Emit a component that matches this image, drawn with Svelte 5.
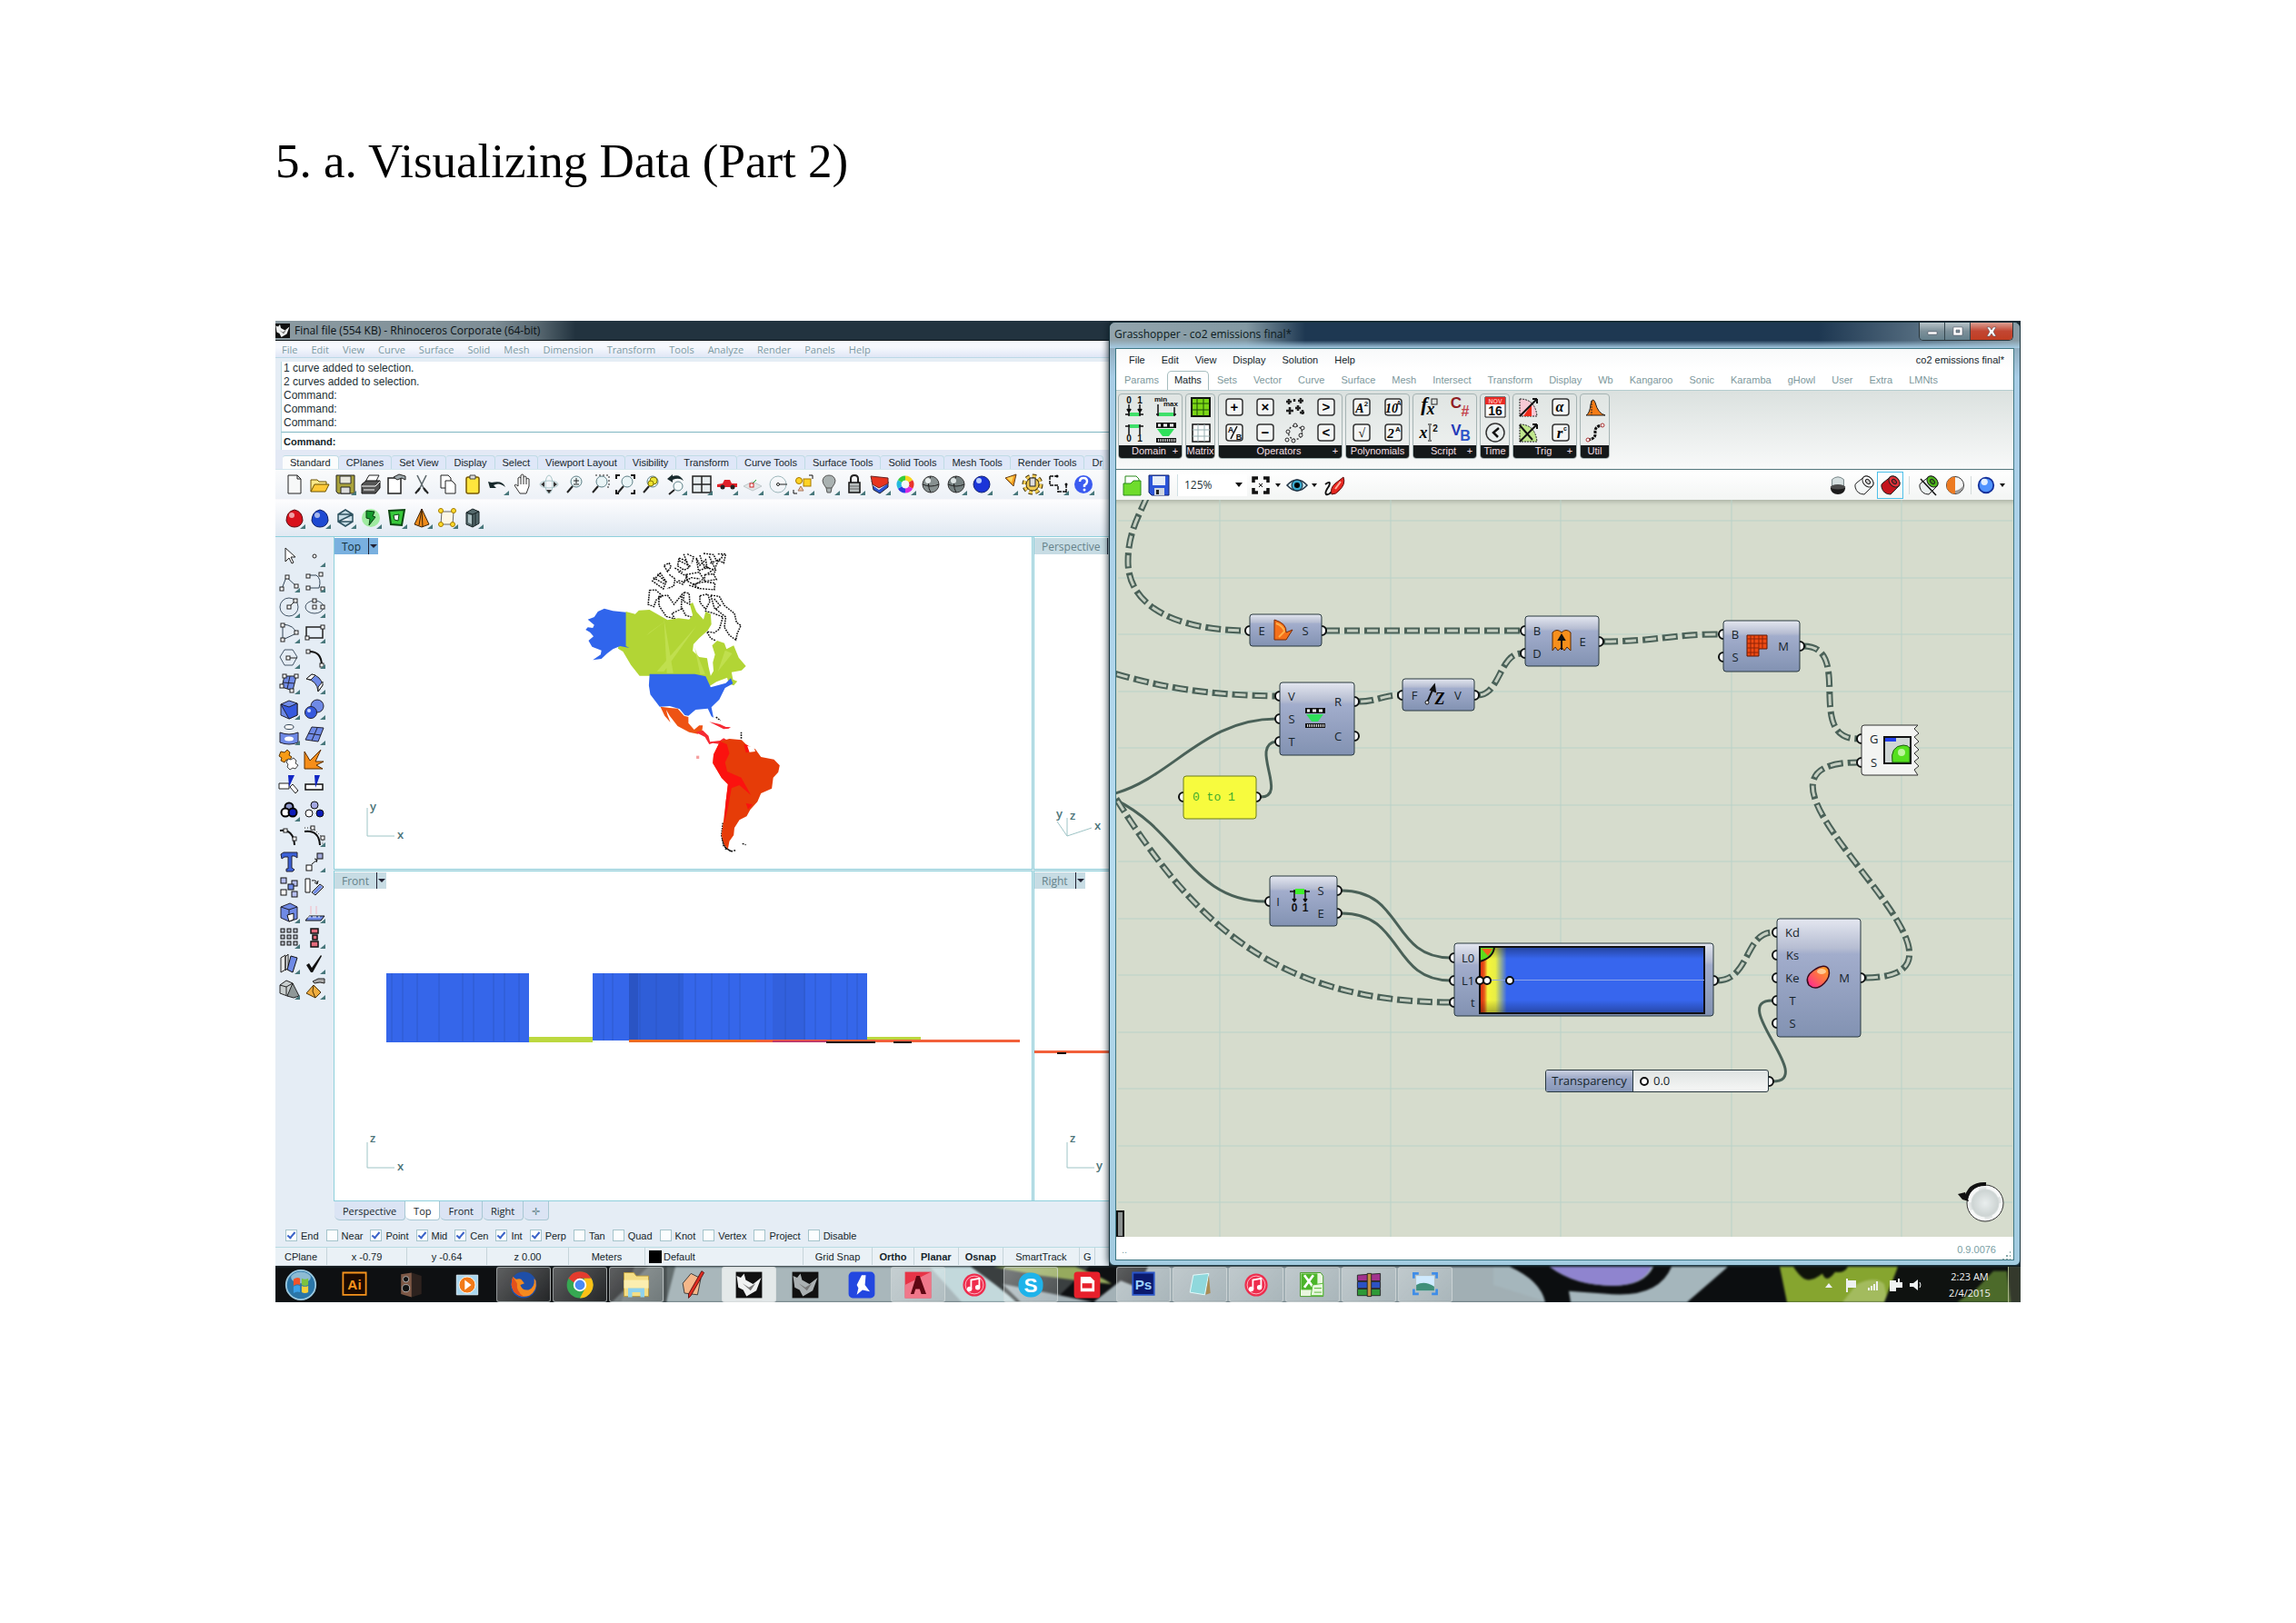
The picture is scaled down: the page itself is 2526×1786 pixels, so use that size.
<script>
  const tri = '<path d="M24 19v5h-6z" fill="#47777b" stroke="none"/>';
  const lens = '<circle cx="14" cy="9" r="6" fill="#e9f4f6" stroke="#5d7f86"/><path d="M10 14l-6 7" stroke="#222" stroke-width="2"/>';
  const globe = (f) => `<circle cx="12" cy="12" r="9" fill="${f}" stroke="#333"/><path d="M3 12q9 4 18 0M12 3q-5 9 0 18" stroke="#222" fill="none"/>`;
  const sq = (x, y, f = '#fff') => `<rect x="${x}" y="${y}" width="4" height="4" fill="${f}" stroke="#222"/>`;
  const box = (x, y, f, s = 6) => `<rect x="${x}" y="${y}" width="${s}" height="${s}" fill="${f}" stroke="#111"/>`;

  const standard = [
    ['New', '<path d="M5 2h10l4 4v16H5zM15 2v4h4" fill="#f7f8f8" stroke="#222"/>'],
    ['Open', '<path d="M2 20V7h7l2 2h8v3" fill="#ffe98a" stroke="#6b5200"/><path d="M2 20l4-8h16l-4 8z" fill="#ffc937" stroke="#6b5200"/>'],
    ['Save', '<path d="M2 2h20v20H4l-2-2z" fill="#a9a23b" stroke="#222"/><path d="M6 3h12v8H6z" fill="#e8e7dc" stroke="#333"/><path d="M7 15h10v7H7z" fill="#ddd" stroke="#222"/>', 1],
    ['Print', '<path d="M6 9l4-7h11l-4 8z" fill="#fff" stroke="#222"/><path d="M2 12l5-4h15v8l-5 6H2z" fill="#555" stroke="#111"/><path d="M2 14h15l5-5M4 18h12" stroke="#fff" fill="none"/>'],
    ['Properties', '<path d="M3 5h14v17H3z" fill="#fff" stroke="#222" stroke-width="1.5"/><path d="M9 4l6-3 7 2v4l-4-2-5 2z" fill="#9fa9ac" stroke="#222"/>'],
    ['Cut', '<path d="M7 2l9 18M17 2L8 20" stroke="#5d686c" stroke-width="1.6"/><path d="M5 22l5-6M19 22l-5-6" stroke="#222" stroke-width="2"/>'],
    ['Copy', '<path d="M5 2h8l3 3v11H5z" fill="#fff" stroke="#222"/><path d="M10 8h7l4 4v10H10z" fill="#fff" stroke="#222"/>'],
    ['Paste', '<rect x="5" y="4" width="14" height="18" rx="2" fill="#ffe53d" stroke="#7a5a00" stroke-width="1.5"/><path d="M9 2h6v4H9z" fill="#ddd" stroke="#444"/>'],
    ['Undo', '<path d="M1 9l2 7 7 0-3-3q6-4 13 2-3-8-15-5z" fill="#17282b"/>', 1],
    ['Pan', '<path d="M8 22l-6-9q1-2 4 1V5q2-2 3 0V2q2-2 3 0v2q2-2 3 0v2q2-1 3 0v8l-3 8zM9 5v7M12 4v8M15 6v6" fill="#fff" stroke="#333"/>'],
    ['Rotate view', '<ellipse cx="12" cy="12" rx="10" ry="4" fill="none" stroke="#a9c5c8"/><ellipse cx="12" cy="12" rx="4" ry="10" fill="none" stroke="#a9c5c8"/><path d="M7 9v6l-4-3zM17 9v6l4-3zM9 18h6l-3 4z" fill="#333"/>'],
    ['Zoom dynamic', lens + '<path d="M11 8h6M14 5v6M11 12h6" stroke="#222"/>'],
    ['Zoom window', lens + '<path d="M7 2h15v13h-3" fill="none" stroke="#222" stroke-dasharray="2 2"/>'],
    ['Zoom extents', lens + '<path d="M2 6V2h4M18 2h4v4M22 18v4h-4M2 18v4h3" fill="none" stroke="#111" stroke-width="2"/>'],
    ['Zoom selected', lens + '<circle cx="15" cy="8" r="4" fill="#ece63b" stroke="#827600"/><circle cx="12" cy="11" r="3" fill="#f1e12d" stroke="#827600"/>'],
    ['Undo view', '<circle cx="14" cy="14" r="5" fill="#f4fafb" stroke="#5d7f86"/><path d="M10 18l-6 5" stroke="#222" stroke-width="2"/><path d="M2 6l6 4V7q7-3 12 1-4-8-12-5V1z" fill="#1b2c2f"/>', 1],
    ['Four views', '<path d="M2 3h20v18H2zM2 12h20M12 3v18" fill="#e6ecee" stroke="#222" stroke-width="1.5"/>', 1],
    ['Named view', '<path d="M1 15v-3l6-1 2-4h6l2 4h6v4z" fill="#e02229"/><circle cx="7" cy="15" r="2.5" fill="#222"/><circle cx="18" cy="15" r="2.5" fill="#222"/>', 1],
    ['Set CPlane', '<path d="M2 14l10-5 10 5-10 5z" fill="#e3e7e8" stroke="#bfc8ca"/><path d="M10 13l6-6" stroke="#1c9b32"/><rect x="9" y="11" width="4" height="4" fill="#fff" stroke="#c22"/>', 1],
    ['Circle', '<circle cx="12" cy="12" r="9" fill="none" stroke="#9db7bb"/><path d="M12 12h10" stroke="#222"/><circle cx="12" cy="12" r="1.5" fill="#fff" stroke="#222"/>', 1],
    ['Osnap', '<circle cx="7" cy="8" r="3.500" fill="#ffd324" stroke="#a67800"/><rect x="12" y="6" width="8" height="8" fill="#ffd324" stroke="#a67800"/><path d="M9 14l3 5H6z" fill="#f3c5a0" stroke="#a67860"/><path d="M18 2h4v4M1 18v4h4" fill="none" stroke="#111"/>', 1],
    ['Lights', '<path d="M9 16q-4-5-4-8 1-6 7-6t7 6q0 3-4 8l-1 5h-4z" fill="#a9b1b1" stroke="#555"/><path d="M9 16h6" stroke="#555"/>', 1],
    ['Lock', '<path d="M8 10V6q0-4 4-4t4 4v4" fill="none" stroke="#222" stroke-width="2"/><rect x="6" y="10" width="12" height="11" fill="#b9bfbf" stroke="#111" stroke-width="1.5"/><path d="M7 14h10M7 17h10" stroke="#666"/>', 1],
    ['Layers', '<path d="M3 8l8 6 10-5v6l-9 7-7-4z" fill="#2c54ce" stroke="#223"/><path d="M3 7l8 7 10-6v3l-10 7-7-5z" fill="#fff"/><path d="M2 3l19 2v6l-10 5-7-4z" fill="#e8341f" stroke="#622"/>', 1],
    ['Colour', '<g fill="none" stroke-width="5"><path d="M12 5a7 7 0 0 1 6 3.500" stroke="#f7d51d"/><path d="M18 8.500a7 7 0 0 1 0 7" stroke="#e9322b"/><path d="M18 15.500a7 7 0 0 1-6 3.500" stroke="#d62be3"/><path d="M12 19a7 7 0 0 1-6-3.500" stroke="#2b3be3"/><path d="M6 15.500a7 7 0 0 1 0-7" stroke="#22b9dd"/><path d="M6 8.500a7 7 0 0 1 6-3.500" stroke="#35cc3b"/></g>', 1],
    ['Shade', globe('#879090') + '<circle cx="9" cy="8" r="3" fill="#e9eeee"/>'],
    ['Ghosted', globe('#758080') + '<circle cx="9" cy="8" r="3" fill="#dfe6e6"/>', 1],
    ['Render', '<circle cx="12" cy="12" r="9" fill="#1b35d8" stroke="#112070"/><circle cx="9" cy="8" r="3" fill="#bcd0ff"/>', 1],
    ['Render preview', '<path d="M10 5l12-4-3 13z" fill="#f59b1f" stroke="#63411a"/><path d="M12 5l7-2-2 7z" fill="#ffd75e"/>', 1],
    ['Options', '<circle cx="12" cy="12" r="9" fill="none" stroke="#3c2d08" stroke-width="5" stroke-dasharray="4 3"/><circle cx="12" cy="12" r="9" fill="none" stroke="#f0cb52" stroke-width="3" stroke-dasharray="4 3"/><circle cx="12" cy="12" r="7" fill="#f0cb52" stroke="#3c2d08"/><rect x="9" y="5" width="6" height="9" fill="#ddd" stroke="#222"/>', 1],
    ['Dimensions', '<path d="M3 3h8M3 3v10h9v8M12 20h9M21 12v9" fill="none" stroke="#111" stroke-width="1.500" stroke-dasharray="4 1"/><circle cx="11" cy="3" r="1.500"/><circle cx="21" cy="12" r="1.500"/>', 1],
    ['Help', '<circle cx="12" cy="12" r="10" fill="#3b5bf0"/><path d="M8 9q0-4 4-4t4 4q0 2-3 4v2" fill="none" stroke="#fff" stroke-width="2.500"/><circle cx="13" cy="18" r="1.500" fill="#fff"/>', 1]
  ];

  const drop = (a, b) => `<path d="M12 3q9 2 9 12-2 7-9 7t-9-7Q3 5 12 3z" fill="${a}" stroke="${b}"/><ellipse cx="9" cy="9" rx="3" ry="3" fill="#fff" opacity=".6"/>`;
  const plugin = [
    ['Red', drop('#d8111c', '#5b0a10')],
    ['Blue', drop('#1d49d2', '#0b1d66')],
    ['Hex', '<path d="M12 3l8 5v8l-8 5-8-5V8zM4 8h16L4 16h16" fill="#c7dde6" stroke="#2e5260" stroke-width="1.500"/>'],
    ['Bolt', '<circle cx="12" cy="12" r="10" fill="#7fe87c" opacity=".7"/><path d="M7 4l9 1-2 5 3 1-7 9 1-7-4-1z" fill="#149a2b" stroke="#0a3c12"/>'],
    ['Frame', '<path d="M4 4l17-1-3 17-12-1z" fill="#37c93a" stroke="#0c4612" stroke-width="2"/><path d="M9 9l6-1-1 7-4-1z" fill="#fff" stroke="#0c4612"/>'],
    ['Cone', '<path d="M12 2l8 17-8 3-8-3z" fill="#f08c1c" stroke="#3a2106"/><path d="M12 2l1 20M12 2L9 20" stroke="#3a2106"/>'],
    ['Cage', '<path d="M6 5h13l-1 14H5z" fill="#fdf7e6" stroke="#666"/><g fill="#ffdc2b" stroke="#a47b00"><circle cx="5" cy="4" r="2.500"/><circle cx="19" cy="4" r="2.500"/><circle cx="18" cy="19" r="2.500"/><circle cx="5" cy="19" r="2.500"/></g>'],
    ['Block', '<path d="M5 6l7-4 7 3v13l-7 4-7-3z" fill="#55696c" stroke="#182426"/><path d="M7 8l4 1v10l-4-2z" fill="#a9bdbf"/><path d="M12 8v14M5 6l7 2 7-3M15 7v13" stroke="#182426" fill="none"/>']
  ];

  const B = '#6f8ae6';
  const side = [
    ['Select', '<path d="M8 3v15l4-4 3 6 2-1-3-6h5z" fill="#fff" stroke="#222"/>'],
    ['Point', '<circle cx="12" cy="12" r="2" fill="#fff" stroke="#222"/>', 1],
    ['Polyline', '<path d="M4 20L9 7l11 10" fill="none" stroke="#345"/>' + sq(2, 18) + sq(8, 5) + sq(18, 15), 1],
    ['Curve', '<path d="M5 5h9q6 4 3 14H5" fill="none" stroke="#345"/>' + sq(3, 4) + sq(17, 2) + sq(3, 17) + sq(19, 18), 1],
    ['Circle', '<circle cx="12" cy="12" r="10" fill="none" stroke="#456"/><path d="M12 12l7-7" stroke="#222"/>' + sq(10, 10) + sq(17, 3), 1],
    ['Ellipse', '<ellipse cx="12" cy="12" rx="10" ry="7" fill="none" stroke="#456"/>' + sq(10, 3) + sq(10, 10) + sq(19, 10), 1],
    ['Arc', '<path d="M5 20V3q13 1 15 10z" fill="none" stroke="#345"/>' + sq(3, 2) + sq(3, 18) + sq(18, 10), 1],
    ['Rectangle', '<path d="M3 6h18v12H3z" fill="none" stroke="#222" stroke-width="1.500"/>' + sq(19, 4) + sq(2, 16), 1],
    ['Polygon', '<path d="M7 3h9l5 8-5 9H7l-5-9z" fill="none" stroke="#456"/><path d="M12 12h9" stroke="#222"/>' + sq(9, 10), 1],
    ['Fillet', '<path d="M5 5q15-1 15 16" fill="none" stroke="#111" stroke-width="2"/>' + sq(3, 3) + sq(18, 18), 1],
    ['Surface', `<path d="M7 4h13l-4 16-12-4z" fill="${B}" stroke="#222"/><path d="M13 4l-3 14M5 11l13 1" stroke="#223"/>` + sq(5, 2) + sq(18, 2) + sq(2, 13) + sq(13, 18), 1],
    ['Bend', `<path d="M3 7l6-5q10 2 12 12l-5 7q-1-12-13-14z" fill="${B}" stroke="#222"/><path d="M3 7l6-5 4 1-5 5zM21 14l-5 7v-5l5-6z" fill="#fff" stroke="#222"/>`, 1],
    ['Box', `<path d="M3 7l9-4 9 3v13l-9 4-9-4z" fill="${B}" stroke="#223"/><path d="M3 7l9 3 9-4v13l-9 4z" fill="#3659de" stroke="#223"/>`, 1],
    ['Spheres', `<circle cx="15" cy="9" r="7" fill="${B}" stroke="#223"/><circle cx="8" cy="16" r="6.500" fill="#3659de" stroke="#223"/><circle cx="6" cy="14" r="2" fill="#cdd9ff"/>`, 1],
    ['Project', `<ellipse cx="12" cy="4" rx="5" ry="2.500" fill="#fff" stroke="#345"/><path d="M2 10q10 4 20 0v11q-10 4-20 0z" fill="${B}" stroke="#223"/><ellipse cx="12" cy="17" rx="5" ry="2.500" fill="#fff"/>`, 1],
    ['Patch', `<path d="M9 4l13 1-6 15-14-2z" fill="${B}" stroke="#223"/><path d="M15 5l-6 14M5 11l14 2" stroke="#223"/>`, 1],
    ['Join', '<path d="M3 3l4 1 3-3 3 3-1 3 3 2-3 4-3-1-2 3-4-2 1-3-3-2z" fill="#f79b16" stroke="#5c3500"/><path d="M11 11l3 1 3-2 3 3-1 3 3 2-3 4-3-1-3 2-3-3 1-3-2-2z" fill="#fff" stroke="#444"/>'],
    ['Explode', '<path d="M1 22V3l6 10L19 1l-6 13h9l-8 4 7 4z" fill="#f68e1a" stroke="#5c2e00"/>'],
    ['Trim', '<path d="M1 10h11v6H1zM13 14l3-3 6 7-3 3z" fill="#fff" stroke="#222"/><path d="M11 1h7l-6 13z" fill="#1227c4"/>'],
    ['Split', '<path d="M2 11h19v6H2z" fill="#fff" stroke="#111" stroke-width="1.500"/><path d="M12 1h6l-5 14z" fill="#1227c4"/>'],
    ['Group', '<g stroke="#000" stroke-width="2"><circle cx="12" cy="8" r="4.500" fill="#8a94c8"/><circle cx="8" cy="14" r="4.500" fill="#fff"/><circle cx="16" cy="14" r="4.500" fill="#0d1cb8"/></g>', 1],
    ['Ungroup', '<g stroke="#111"><circle cx="12" cy="6" r="4" fill="#a4a8e2"/><circle cx="6" cy="15" r="4" fill="#fff"/><circle cx="18" cy="15" r="4" fill="#0d1cb8"/></g>'],
    ['Edit points', '<path d="M2 6q15-2 16 16" fill="none" stroke="#111" stroke-width="2"/>' + sq(6, 4) + sq(16, 13)],
    ['Control points', '<path d="M1 7q16-2 17 15" fill="none" stroke="#111" stroke-width="2"/><path d="M1 3h9l11 11v8" fill="none" stroke="#222" stroke-dasharray="1 2"/>' + sq(8, 1) + sq(19, 12), 1],
    ['Text', '<path d="M3 4l3-2h15v6l-3-2h-3v13l3 2-2 2H9v-3h2V7H7L4 9z" fill="#3c61d8" stroke="#223"/>'],
    ['Move', box(3, 16, '#fff') + box(15, 3, '#a0a8d8') + '<path d="M9 15l6-5M12 9l3 1-1 3" stroke="#111" fill="none"/>', 1],
    ['Array copy', box(3, 2, '#b7bff0') + box(3, 15, '#fff') + box(15, 5, '#b7bff0') + box(11, 9, B) + box(15, 17, '#b7bff0')],
    ['Rotate', `<path d="M2 3h5v15H2zM9 18l9-9 4 3-9 9z" fill="#fff" stroke="#111"/><path d="M10 18l8-8 3 2-8 8z" fill="${B}"/><path d="M9 5q5-1 6 3M16 5l-1 4-3-2" stroke="#111" fill="none"/>`],
    ['Solid edit', `<path d="M3 6l10-4 8 4v13l-9 3-9-4z" fill="${B}" stroke="#223"/><path d="M3 6l9 3 9-3M12 9v6" stroke="#223" fill="none"/><path d="M10 15l7-2v7l-5 2z" fill="#fff" stroke="#111"/>`, 1],
    ['Extrude', `<path d="M6 16h17l-4 5H2z" fill="${B}" stroke="#111"/><path d="M4 17h14" stroke="#fff" stroke-dasharray="4 2"/><path d="M8 5v9M14 5v9" stroke="#f3b9c4" />`, 1],
    ['Array', [2, 9, 16].map((y) => [3, 10, 17].map((x) => box(x, y, '#bcc2ce', 4)).join('')).join(''), 1],
    ['Align', '<g fill="#e36b7c" stroke="#111" stroke-width="1.500"><path d="M8 2h8v5H8zM10 9h5v5h-5zM8 16h8v6H8z"/></g>', 1],
    ['Mirror', `<path d="M3 6l5-3v16l-5 3zM8 20V5l3-3v15z" fill="#e7e9e9" stroke="#222"/><path d="M14 4l7 2-5 16-6-3z" fill="${B}" stroke="#111"/>`, 1],
    ['Check', '<path d="M3 14l3-2 3 5L19 3l1 1L10 22H8z" fill="#111"/>', 1],
    ['Boolean', '<path d="M2 8l7-5 7 3v11l-6 3-8-3z" fill="#c9cfcf" stroke="#222"/><path d="M2 8l7 2 7-4M9 10v9" stroke="#222" fill="none"/><path d="M16 6l7 14-6 2-7-2z" fill="#8f9898" stroke="#222"/>', 1],
    ['Edit', '<path d="M3 17l8-9 8 8-6 6z" fill="#f0ad3f" stroke="#4c3104"/><path d="M11 8l-1 7 3 7" stroke="#4c3104" fill="none"/><path d="M10 4l6-3 7 0v5l-5-1-6 1z" fill="#aaa" stroke="#222"/>', 1]
  ];

  const rhinoMenu = ['File', 'Edit', 'View', 'Curve', 'Surface', 'Solid', 'Mesh', 'Dimension', 'Transform', 'Tools', 'Analyze', 'Render', 'Panels', 'Help'];
  const rhinoTabs = ['Standard', 'CPlanes', 'Set View', 'Display', 'Select', 'Viewport Layout', 'Visibility', 'Transform', 'Curve Tools', 'Surface Tools', 'Solid Tools', 'Mesh Tools', 'Render Tools', 'Dr'];
  const history = ['1 curve added to selection.', '2 curves added to selection.', 'Command:', 'Command:', 'Command:'];
  const osnaps = [['End', true], ['Near', false], ['Point', true], ['Mid', true], ['Cen', true], ['Int', true], ['Perp', true], ['Tan', false], ['Quad', false], ['Knot', false], ['Vertex', false], ['Project', false], ['Disable', false]];

  const ghMenu = ['File', 'Edit', 'View', 'Display', 'Solution', 'Help'];
  const ghTabs = ['Params', 'Maths', 'Sets', 'Vector', 'Curve', 'Surface', 'Mesh', 'Intersect', 'Transform', 'Display', 'Wb', 'Kangaroo', 'Sonic', 'Karamba', 'gHowl', 'User', 'Extra', 'LMNts'];

  const key = (s) => `<rect x="3" y="3" width="18" height="18" rx="3" fill="#f4f6f5" stroke="#333" stroke-width="1.500"/>${s}`;
  const glyph = (t) => `<text x="12" y="17" font-size="15" text-anchor="middle" font-family="Liberation Sans, sans-serif" font-weight="bold">${t}</text>`;
  const serif = (t, size, x, y) => `<text x="${x}" y="${y}" font-size="${size}" text-anchor="middle" font-family="Liberation Serif, serif" font-weight="bold" font-style="italic">${t}</text>`;
  const mono = (t, size, x, y, f = '#111') => `<text x="${x}" y="${y}" font-size="${size}" fill="${f}" text-anchor="middle" font-family="Liberation Sans, sans-serif" font-weight="bold">${t}</text>`;
  const comb = '<rect x="1" y="1" width="22" height="6" fill="#111"/><path d="M3 4h3M9 4h4M16 4h4" stroke="#fff" stroke-width="3"/><path d="M2 8h19l-6 8h-7z" fill="#2fe05a"/><rect x="1" y="18" width="22" height="5" fill="#111"/><path d="M3 20.500h19" stroke="#ddd" stroke-width="3" stroke-dasharray="1 1"/>';
  const heads = '<path d="M4 14l2 3 2-3M16 14l2 3 2-3" stroke="#111" stroke-width="2"/>';
  const groups = [
    { name: 'Domain', more: true, icons: [
      mono('0', 10, 6, 8) + mono('1', 10, 18, 8) + heads + '<path d="M6 9v13M18 9v13M2 20h20" stroke="#111" stroke-width="1.500"/><rect x="7" y="18" width="10" height="4" fill="#3fe06a"/>',
      mono('min', 8, 6, 6) + mono('max', 8, 17, 11) + '<path d="M3 9v13M21 12v10M1 20h22" stroke="#111" stroke-width="1.500"/><rect x="4" y="18" width="16" height="4" fill="#3fe06a"/>',
      '<path d="M6 3v11M18 3v11M2 5h20" stroke="#111" stroke-width="1.500"/><rect x="7" y="3" width="10" height="4" fill="#3fe06a"/>' + mono('0', 10, 6, 22) + mono('1', 10, 18, 22),
      comb ] },
    { name: 'Matrix', icons: [
      '<path d="M2 2h20v20H2z" fill="#7bd615" stroke="#111" stroke-width="2"/><path d="M8 2v20M15 2v20M2 8h20M2 15h20" stroke="#1b4a06"/>',
      '<path d="M3 3h19v19H3z" fill="#fff" stroke="#111" stroke-width="1.500"/><path d="M9 3v19M16 3v19M3 9h19M3 16h19" stroke="#99b0b3"/>' ] },
    { name: 'Operators', more: true, icons: [
      key(glyph('+')), key(glyph('×')),
      '<path d="M5 3v6M2 6h6M18 2v6M15 5h6M6 12v8M2 16h8M15 10v6M12 13h6M20 15v5M17 18h5M11 3v3" stroke="#222" stroke-width="2.500"/>',
      key(glyph('&gt;')), key(mono('A', 9, 8, 12) + mono('B', 9, 17, 20) + '<path d="M8 19l7-14" stroke="#111" stroke-width="1.500"/>'), key(glyph('−')),
      '<circle cx="12" cy="12" r="7.500" fill="none" stroke="#333" stroke-width="1.500" stroke-dasharray="2 2"/><g fill="#fff" stroke="#222"><circle cx="12" cy="4" r="2"/><circle cx="20" cy="7" r="2"/><circle cx="18" cy="15" r="2"/><circle cx="10" cy="21" r="2"/><circle cx="3" cy="20" r="2"/><circle cx="4" cy="11" r="2"/></g>',
      key(glyph('&lt;')) ] },
    { name: 'Polynomials', icons: [
      key(serif('A', 14, 10, 18) + mono('2', 8, 17, 11)), key(serif('10', 14, 10, 18) + mono('A', 7, 18, 10)),
      key(serif('√', 14, 12, 17)), key(serif('2', 15, 9, 18) + mono('A', 8, 17, 11)) ] },
    { name: 'Script', more: true, icons: [
      serif('f', 22, 7, 16) + serif('x', 18, 14, 20) + '<rect x="15" y="3" width="6" height="6" fill="none" stroke="#222"/>',
      mono('C', 17, 7, 13, '#8f1d24') + mono('#', 16, 17, 22, '#c3434b'),
      serif('x', 18, 6, 18) + '<path d="M13 4v16M11 3h4M11 21h4" stroke="#111"/>' + mono('2', 10, 19, 11),
      mono('V', 17, 7, 15, '#2439b8') + mono('B', 16, 17, 21, '#2f56c9') ] },
    { name: 'Time', icons: [
      '<path d="M1 1h22v22H1z" fill="#fff" stroke="#111"/><path d="M1 1h22v8H1z" fill="#e82a25"/>' + mono('NOV', 7, 12, 8, '#ffb4ac') + mono('16', 14, 12, 21),
      '<circle cx="12" cy="12" r="10" fill="#e9eeee" stroke="#333" stroke-width="1.500"/><path d="M16 7l-6 5 5 5" fill="none" stroke="#111" stroke-width="2.500"/>' ] },
    { name: 'Trig', more: true, icons: [
      '<path d="M2 3q17 0 19 19H2z" fill="#f6c9d5" stroke="#222" stroke-dasharray="2 1"/><path d="M6 22L15 9v13z" fill="#ee2a19"/><path d="M2 22L21 3M21 3v5M21 3h-5" stroke="#111" stroke-width="2"/>', key(serif('α', 16, 11, 17)),
      '<path d="M2 3q17 0 19 19H2z" fill="#bfe78c" stroke="#222" stroke-dasharray="2 1"/><path d="M2 4l14 16M2 22L21 3M21 3v5M21 3h-5" stroke="#111" stroke-width="2"/>', key(serif('r', 17, 11, 18) + mono('c', 7, 17, 10)) ] },
    { name: 'Util', icons: [
      '<path d="M2 21q4-2 5-12 2-9 5-2 3 12 11 14z" fill="#f57c16" stroke="#222"/><path d="M8 5v16" stroke="#222" stroke-dasharray="2 1"/>',
      '<path d="M4 20q9-1 8-8t8-8" fill="none" stroke="#111" stroke-width="3" stroke-dasharray="3 1"/><circle cx="4" cy="20" r="2" fill="#fff" stroke="#a33"/><circle cx="20" cy="4" r="2" fill="#fff" stroke="#a33"/>' ] }
  ];

  const cyl = (a, b) => `<path d="M2 14Q1 11 4 9L13 2q6-1 9 7 0 3-1 4l-9 9q-8 0-10-8z" fill="${a}" stroke="#222"/><ellipse cx="16" cy="8" rx="7" ry="5" transform="rotate(45 16 8)" fill="${b}" stroke="#222"/><ellipse cx="16" cy="8" rx="3" ry="2" transform="rotate(45 16 8)" fill="#0003" stroke="#222"/>`;
  const ghTools = {
    open: '<path d="M4 2h12l3 3v8H4z" fill="#fff" stroke="#2b8a1a"/><path d="M2 10h8l3-3h8v16H2z" fill="#6fdc2c" stroke="#2b8a1a"/>',
    save: '<path d="M1 1h22v22H4l-3-3z" fill="#2c55d8" stroke="#13236b"/><path d="M5 2h14v10H5z" fill="#e7edf7"/><path d="M7 15h11v8H7z" fill="#cfd6e0"/><path d="M9 17h3v5H9z" fill="#222"/>',
    fit: '<path d="M4 9V4h5M15 4h5v5M20 15v5h-5M9 20H4v-5" fill="none" stroke="#111" stroke-width="3.500"/><path d="M10 10l4 4M14 10l-4 4" stroke="#111"/>',
    eye: '<path d="M1 12Q12 0 23 12 12 24 1 12z" fill="#d9f0f6" stroke="#234" stroke-width="1.500"/><circle cx="12" cy="12" r="6" fill="#39a5c9" stroke="#123"/><circle cx="12" cy="12" r="3"/>',
    brush: '<path d="M2 11q7-5 4 2-5 7-3 9 3 1 6-3" fill="none" stroke="#111" stroke-width="2"/><path d="M9 22q-2-7 4-12l9-7q3 8-5 15-3 4-8 4z" fill="#e6261f" stroke="#5b1010"/><path d="M13 16l6-8" stroke="#ffb0a0" stroke-width="2"/>',
    none: '<path d="M5 5q7-6 14 0v8H5z" fill="#d5dfe0" stroke="#6b7b7d"/><path d="M3 15q9-5 18 0-1 8-9 8t-9-8z" fill="#1b1b1b"/><ellipse cx="12" cy="14" rx="9" ry="3" fill="#4a4a4a"/>',
    wire: cyl('#f4f7f7', '#fff'),
    solid: cyl('#c4141d', '#e4333b'),
    sel: cyl('#e8eeee', '#4fbb1d') + '<path d="M3 5l17 18" stroke="#111" stroke-width="1.500"/>',
    half: '<circle cx="12" cy="12" r="9.500" fill="#f4f4f4" stroke="#333"/><path d="M12 2.500a9.500 9.500 0 0 0 0 19z" fill="#ec7a22"/><path d="M21 12a9 9 0 0 1-9 9v-3q6-1 9-6z" fill="#999"/>',
    ball: '<circle cx="12" cy="12" r="9" fill="#4f93ff" stroke="#15329c" stroke-width="2"/><circle cx="10" cy="8" r="4" fill="#e1efff"/>'
  };

  const note = '<circle cx="20" cy="20" r="14" fill="#ee2d4e"/><circle cx="20" cy="20" r="11" fill="none" stroke="#ffc5cf"/><path d="M16 25V14l10-2v11" fill="none" stroke="#fff" stroke-width="2"/><circle cx="14" cy="25" r="3" fill="#fff"/><circle cx="24" cy="23" r="3" fill="#fff"/>';
  const rhino = '<path d="M4 4h32v32H4z" fill="#111"/><path d="M5 9l5 2 4-5 2 8 9 5 10-8-6 16-12 7-4-8-6-3z" fill="#f0f2f2"/><path d="M12 18l8 5 8-5-6 9z" fill="#777"/>';
  const tasks = [
    ['Start', '<circle cx="20" cy="20" r="18" fill="#2b76a8" stroke="#9cc9df" stroke-width="2"/><ellipse cx="20" cy="11" rx="12" ry="7" fill="#b8d9e6" opacity=".7"/><path d="M11 13q4-3 8-1v8q-4-2-8 1z" fill="#f0532a"/><path d="M21 12q4 2 8 0v8q-4 2-8 0z" fill="#7cc23f"/><path d="M11 22q4-3 8-1v8q-4-2-8 1z" fill="#3aa0e8"/><path d="M21 21q4 2 8 0v8q-4 2-8 0z" fill="#f9cf36"/>'],
    ['Illustrator', '<path d="M6 5h28v27H6z" fill="#1c0a00" stroke="#f7941d" stroke-width="2"/>' + mono('Ai', 17, 20, 25, '#f7941d')],
    ['Speakers', '<path d="M8 7l13-2v30l-13-4z" fill="#7d5846"/><path d="M21 5l12 4v22l-12 4z" fill="#2d221e"/><circle cx="14" cy="13" r="3.500" fill="#111" stroke="#bbb"/><circle cx="14" cy="24" r="4.500" fill="#111" stroke="#bbb"/>'],
    ['Media', '<path d="M7 8h26v24H7z" fill="#a8d6ee" stroke="#e6f6ff"/><circle cx="20" cy="20" r="10" fill="#f27a1a" stroke="#fff"/><path d="M17 14l8 6-8 6z" fill="#fff"/>'],
    ['Firefox', '<circle cx="20" cy="20" r="16" fill="#1f4fa8"/><path d="M7 10q-4 10 1 18 8 9 19 5 10-6 8-18l-2-3q1 12-7 14-8 1-10-6l5-2-4-5q-2-1-6 0z" fill="#f58a1f"/><path d="M7 10q-4 10 1 18 6 6 12 6-9-6-8-16z" fill="#e4511c"/>', 1],
    ['Chrome', '<circle cx="20" cy="20" r="16" fill="#36a852"/><path d="M6 12a16 16 0 0 1 28 0H20l-6 6z" fill="#e33b2e"/><path d="M34 12a16 16 0 0 1-14 24l7-13-2-11z" fill="#fbc116"/><circle cx="20" cy="20" r="7" fill="#4a8af4" stroke="#fff" stroke-width="2"/>', 1],
    ['Explorer', '<path d="M5 5h12l3 4h15v25H5z" fill="#f4de86" stroke="#b99a3a"/><path d="M5 14h30v10H5z" fill="#fbeeb0"/><path d="M10 35V24h20v11h-5v-6H15v6z" fill="#8fd2ee"/>', 1],
    ['Sketch', '<path d="M8 18l10-12 12 6-4 20-16-2z" fill="#f5b78a" stroke="#333"/><path d="M34 5L18 33l-3 3 0-5L31 3z" fill="#e02b20" stroke="#511"/>'],
    ['Rhino', rhino, 2],
    ['Rhino 5', rhino.replace('#f0f2f2', '#aab0b2')],
    ['Rabbit', '<rect x="4" y="4" width="32" height="32" rx="5" fill="#2347e0"/><path d="M20 8l5 0-1 12 6 8-9-2-7 6 2-8-2-4z" fill="#fff"/>'],
    ['AutoCAD', '<path d="M4 4h32v32H4z" fill="#e73447"/><path d="M4 20L36 4v32H4z" fill="#f0778a"/><path d="M11 31l7-22h4l8 22h-6l-2-6h-5l-2 6z" fill="#5e0712"/>', 1],
    ['iTunes', note],
    ['Skype', '<rect x="5" y="5" width="30" height="30" rx="14" fill="#1fb3ea"/>' + mono('S', 25, 20, 29, '#fff'), 1],
    ['Reader', '<rect x="4" y="4" width="32" height="32" rx="4" fill="#e7202b"/><path d="M12 10h12l5 5v13H12z" fill="#fff"/><path d="M14 18h12v6H14z" fill="#e7202b"/>'],
    ['Photoshop', '<path d="M7 5h26v27H7z" fill="#0b1a6e" stroke="#2a55c8" stroke-width="2"/>' + mono('Ps', 17, 20, 25, '#9dd3ff'), 1],
    ['Notepad', '<path d="M12 8l19-2-5 26-18-3z" fill="#8fd8dc" stroke="#e9ffff"/><path d="M31 8l2 22-6 2z" fill="#a98d55"/>', 1],
    ['iTunes store', note, 1],
    ['Excel', '<path d="M5 5h25l3 4v25H5z" fill="#e9f7df" stroke="#3f9a1f"/><path d="M6 6h20v20H6z" fill="#4cb52a"/><path d="M10 8l11 15M21 8L10 23" stroke="#fff" stroke-width="3"/><path d="M20 20l13-2v15H18z" fill="#e9f7df" stroke="#4cb52a"/><path d="M22 24h9M22 29h9" stroke="#4cb52a"/>', 1],
    ['WinRAR', '<path d="M6 8l28-2v9H6z" fill="#a2338e" stroke="#222"/><path d="M6 16h28v8H6z" fill="#2c52c4" stroke="#222"/><path d="M6 25h28v8H6z" fill="#2f9a37" stroke="#222"/><path d="M18 6h5v28h-5z" fill="#c29042" stroke="#222"/>', 1],
    ['Viewer', '<path d="M6 12V6h6M28 6h6v6M34 25v6h-6M12 31H6v-6" fill="none" stroke="#3f8de8" stroke-width="3"/><path d="M9 9h22v18H9z" fill="#cfeaff"/><path d="M9 20q10-6 22 2v5H9z" fill="#3f8f7a"/>', 1]
  ];

  const gridX = [1342, 1530, 1717, 1905, 2092];
  const gridY = Array.from({ length: 13 }, (_, i) => 573 + Math.round(i * 62.5));
  const dashed = [
    'M1262 546C1254 566 1241 585 1241 618C1241 665 1290 693 1370 694',
    'M1226 741C1280 757 1330 765 1404 766',
    'M1457 694H1674',
    'M1494 772C1515 772 1522 765 1539 765',
    'M1626 765C1650 765 1650 719 1674 719',
    'M1763 706C1820 706 1840 698 1891 698',
    'M1984 711C2040 711 1985 813 2044 813',
    'M2051 1076C2226 1076 1869 839 2044 839',
    'M1228 879C1310 1010 1400 1103 1596 1103',
    'M1889 1079C1925 1079 1920 1026 1950 1026'
  ];
  const solid = [
    'M1227 873C1290 855 1325 791 1404 791',
    'M1387 877C1418 877 1374 820 1404 816',
    'M1227 880C1300 915 1310 991 1392 992',
    'M1476 980C1545 980 1530 1054 1596 1054',
    'M1476 1005C1545 1005 1530 1079 1596 1079',
    'M1950 1190C2000 1190 1900 1101 1950 1101'
  ];
  const nodes = [
    { x: 1375, y: 676, w: 79, h: 35, in: [['E', 694]], out: [['S', 694]], ix: 1398, iy: 681, icon: '<path d="M4 1q14 4 13 14l7-3-7 11H4z" fill="#f5701b" stroke="#7a2b06"/><path d="M6 5q8 3 9 9L9 20" fill="none" stroke="#ffb04a" stroke-width="2"/>' },
    { x: 1678, y: 678, w: 81, h: 55, in: [['B', 694], ['D', 719]], out: [['E', 706]], ix: 1706, iy: 693, icon: '<path d="M2 3q5-5 10 0 5-5 10 0v20l-4-4-3 4-3-4-4 4-3-4-3 4z" fill="#f78f1c" stroke="#5a2b05"/><path d="M12 22V8M9 11l3-5 3 5z" stroke="#111" stroke-width="2"/>' },
    { x: 1408, y: 751, w: 82, h: 80, in: [['V', 766], ['S', 791], ['T', 816]], out: [['R', 772], ['C', 810]], ix: 1435, iy: 778, icon: comb },
    { x: 1543, y: 747, w: 79, h: 35, in: [['F', 765]], out: [['V', 765]], ix: 1567, iy: 753, icon: '<path d="M3 20L10 4M7 6l4-5 1 7z" stroke="#111" stroke-width="2"/><circle cx="3" cy="20" r="2" fill="#fff" stroke="#111"/>' + serif('Z', 18, 17, 22) },
    { x: 1896, y: 683, w: 84, h: 56, in: [['B', 698], ['S', 723]], out: [['M', 711]], ix: 1921, iy: 698, icon: '<path d="M1 1h22v15h-9v8H1z" fill="#ee4a13" stroke="#5d1604"/><path d="M5 1v23M9 1v23M14 1v15M18 1v15M1 5h22M1 10h22M1 15h13M1 20h13" stroke="#8f2206"/>' },
    { x: 1397, y: 964, w: 74, h: 55, in: [['I', 992]], out: [['S', 980], ['E', 1005]], ix: 1418, iy: 978, icon: '<path d="M6 1v11M18 1v11M1 3h22M4 11l2 3 2-3M16 11l2 3 2-3" stroke="#111" stroke-width="1.500"/><rect x="7" y="0" width="10" height="6" fill="#3ff02a"/>' + mono('0', 12, 6, 25) + mono('1', 12, 18, 25) },
    { x: 1955, y: 1011, w: 92, h: 130, in: [['Kd', 1026], ['Ks', 1051], ['Ke', 1076], ['T', 1101], ['S', 1126]], out: [['M', 1076]], ix: 1988, iy: 1063, icon: '<path d="M2 21Q-3 12 7 5q13-9 17-1 2 8-5 15-9 9-17 2z" fill="url(#gem)" stroke="#3c0a1c" stroke-width="1.500"/><ellipse cx="16" cy="6" rx="5" ry="3" fill="#ffd9a8" opacity=".8"/>' }
  ];

  const strips = [6, 18, 34, 58, 84, 96, 118, 130, 146];
  const strips2 = [12, 22, 52, 70, 95, 113, 131, 150, 162, 190, 212, 233, 245, 262, 280, 291];
  const isles = [
    'M372 75l20 10 8 22-14 8-18-14zM395 62l18 10-6 20M420 75l10 24 16-18 4 26-24 10zM440 60l28 4 8 20-20 10M480 62l22 0-6 30-14-10-10 26',
    'M330 100l14-8 6 12-10 16zM320 125l-22 26 30 26 8-24zM345 130l16 14-4 24-18 8M370 120l24 16-12 26-20-10M392 130l36-8 12 22-24 20-20-12zM444 130l24-2 8 18-34 6z',
    'M410 162l20 14 40 4 2-22-30-4zM290 182l16-2 20 20-18 14-6 22-16-8zM316 202l24-4 18 30 22-32-2 48-26 14 8 18-24-8-20-36z',
    'M386 188l14 4 2 36-18-10zM380 240l10 24 16 6M430 200l22-6 6 24-12 26-16-22zM460 198l24 4 14 30 28 26 6 30 12 10-10 26-4 22-18-16-14-26 4-34-32-30z',
    'M444 250l20 6 30 14-10 40-14 12-20-4M450 320l10 20 14 8M470 210l16 22-14 14',
    'M300 140l30 20M312 128l26 30M360 108l22 14M372 84l34 20M430 66l8 30 20 14M456 70l16 40-20 16M370 150l16 4 20-14 24 4M400 165l30 12M440 105l34 10-6 14M476 84l14-8 4-12M385 62l10 30'
  ];
</script>

{#snippet ico(markup, size, more)}
  <svg class="ico" width={size} height={size} viewBox={size > 30 ? '0 0 40 40' : '0 0 24 24'} aria-hidden="true">
    {@html markup}{#if more}{@html tri}{/if}
  </svg>
{/snippet}

<main class="page">
  <h1>5. a. Visualizing Data (Part 2)</h1>

  <section class="desktop">
    <div class="windows">
      <article class="rhino">
        <header class="rtitle">
          <svg class="ico" width="16" height="16" viewBox="4 4 32 32" aria-hidden="true">{@html rhino}</svg>
          <span>Final file (554 KB) - Rhinoceros Corporate (64-bit)</span>
        </header>
        <nav class="rmenu">{#each rhinoMenu as m}<button>{m}</button>{/each}</nav>
        <div class="history">{#each history as line}<p>{line}</p>{/each}</div>
        <label class="prompt"><b>Command:</b><input type="text" /></label>
        <div class="rtabs">{#each rhinoTabs as t, i}<button class:on={i === 0}>{t}</button>{/each}</div>
        <div class="tools std">{#each standard as [n, m, more]}<button aria-label={n}>{@render ico(m, 24, more)}</button>{/each}</div>
        <div class="tools plug">{#each plugin as [n, m]}<button aria-label={n}>{@render ico(m, 24, 1)}</button>{/each}</div>

        <div class="work">
          <aside class="side">{#each side as [n, m, more]}<button aria-label={n}>{@render ico(m, 24, more)}</button>{/each}</aside>
          <div class="views">
            <div class="view">
              <button class="vlabel on">Top<i></i></button>
              <svg class="scene" aria-label="Map of the Americas">
                <g transform="translate(-368 -592)">
                  <g transform="translate(600 590) scale(.3954 .3333)">
                    <g class="isle">{#each isles as d}<path {d} />{/each}
                      <path d="M494 950l-4 40 6 36 20 18 14-4M500 1035l16 6M492 1000l8 30 20 16M548 1018l10 4M545 650v22M560 702l20 4 6 18M572 700l-6 12M475 600l12 12" /></g>
                    <path d="M224 252l26 8 10-12 30-2 30 20 20 14 30-6 30 4 10-14-8-36 8-6 10 30 20 26 6-26 14 8 2 34-10 20-24 26-16 20-2 22 18 20 22 4 4 28 6 30 8-16-2-28 6-26-8-30 14-16 20 8 6 20 20-12 14 40 20 28-12 14-28 6 4 24 12 6-10 14-14-6-4-20-30 14-30 22-10-36-20-6h-154l-24-36-22-44-14-10z" fill="#b2d535" />
                    <path d="M330 275l8 180h18zM290 320l-10 12 60-54zM420 300l-110 150h20zM415 370l30 90h-14zM500 380l-20 70 40-60z" fill="#c6e35a" opacity=".7" />
                    <path d="M224 254v112l10 6-26-6-20 10-16 14-16 18-24 4 22-18 2-14-26-12-10-20 14-14-10-14-12-8 6-8 14 2 4-10-18-18 18-8 10-18 18-10 24 8z" fill="#3065ec" />
                    <path d="M290 458h126l30 8 14 36 42-14 14-16 6 18-22 14-16 38-22 26 4 24 2 10-6-4-10-26-34 4-20 20-10-2-14-20-28-10-28 2-26-40-4-30z" fill="#3065ec" />
                    <path d="M320 566l26 4 22 2 18 24 12 4 0 20 16 22 14-14h10l-2 18-12 10-24-6-32-20-22-34-10-20 4 18 8 24-16-22z" fill="#ee5313" />
                    <path d="M418 650l20-6 16 18 4 20 28-4 10-8 12 8-6 14-36-6-10 4-12-24zM456 616l30 8 26 14-16 2-20-12zM500 632l16 2-8 6z" fill="#f62a33" />
                    <path d="M486 680L512 672 546 676 560 692 584 706 600 732 636 740 652 760 648 782 634 800 630 836 600 852 590 880 570 906 560 928 540 940 526 966 524 990 512 1010 508 1036 498 1022 490 990 496 940 502 880 508 822 490 800 466 752 468 724z" fill="#e63c08" />
                    <path d="M486 680L505 690 512 720 500 750 506 780 545 800 572 858 540 825 518 835 508 900 498 950 502 880 508 822 490 800 466 752 468 724zM552 690l10 2 10 22-14 4zM558 885l18 4-12 16z" fill="#fb120f" />
                    <path d="M562 696l18 2 4 16-16 2z" fill="#fff" />
                    <path d="M420 728h8v10h-8z" fill="#f6a0a0" />
                  </g>
                  <g class="axis"><path d="M404 890v31h30" /><text x="407" y="893">y</text><text x="437" y="924">x</text></g>
                </g>
              </svg>
            </div>
            <div class="view">
              <button class="vlabel">Perspective<i></i></button>
              <svg class="scene" aria-hidden="true"><g class="axis" transform="translate(-1138 -592)"><path d="M1163 905l11 16v-20M1174 921l27-9" /><text x="1162" y="901">y</text><text x="1177" y="903">z</text><text x="1204" y="914">x</text></g></svg>
            </div>
            <div class="view">
              <button class="vlabel">Front<i></i></button>
              <svg class="scene" aria-hidden="true">
                <g transform="translate(-368 -960)">
                  <path d="M581 1142h71v6h-71zM953 1142h60v5h-60z" fill="#bcd83f" />
                  <path d="M425 1072h157v76H425zM652 1072h302v74H652z" fill="#3566ea" />
                  <path d="M692 1072h60v74h-60z" fill="#2f5ed8" />
                  <path d="M692 1072h10v74h-10z" fill="#2a54c4" />
                  <path d="M850 1072h36v74h-36z" fill="#3260dd" />
                  {#each strips as s}<path class="strip" d="M{425 + s} 1072v75" />{/each}
                  {#each strips2 as s}<path class="strip" d="M{652 + s} 1072v74" />{/each}
                  <path d="M692 1145h430v3H692z" fill="#f2603a" />
                  <path d="M692 1145h140v3H692z" fill="#ee6b22" />
                  <path d="M850 1146h60v2h-60z" fill="#c13b69" />
                  <path d="M909 1147h54v2h-54zM983 1147h20v2h-20z" fill="#111" />
                  <g class="axis"><path d="M404 1258v28h30" /><text x="407" y="1258">z</text><text x="437" y="1289">x</text></g>
                </g>
              </svg>
            </div>
            <div class="view">
              <button class="vlabel">Right<i></i></button>
              <svg class="scene" aria-hidden="true"><g transform="translate(-1138 -960)"><path d="M1138 1157h90v3h-90z" fill="#f2603a" /><path d="M1163 1159h10v2h-10z" /><g class="axis"><path d="M1174 1258v28h30" /><text x="1177" y="1258">z</text><text x="1206" y="1288">y</text></g></g></svg>
            </div>
          </div>
        </div>
        <div class="vtabs">
          <button>Perspective</button><button class="on">Top</button><button>Front</button><button>Right</button><button aria-label="New viewport" class="plus">✛</button>
        </div>
        <div class="osnap">
          {#each osnaps as [n, c]}<label><input type="checkbox" checked={c} />{n}</label>{/each}
        </div>
        <footer class="rstatus">
          <span class="c1">CPlane</span><span class="c2">x -0.79</span><span class="c2">y -0.64</span><span class="c3">z 0.00</span><span class="c4">Meters</span>
          <span class="c5"><i></i>Default</span>
          <button class="c6">Grid Snap</button><button><b>Ortho</b></button><button><b>Planar</b></button><button><b>Osnap</b></button><button class="c7">SmartTrack</button><button class="c8">G</button>
        </footer>
      </article>

      <article class="gh">
        <header class="gtitle">
          <span>Grasshopper - co2 emissions final*</span>
          <div class="winbtns">
            <button aria-label="Minimize"><svg width="12" height="12"><path d="M1 6h10v3H1z" /></svg></button>
            <button aria-label="Maximize"><svg width="12" height="12"><path d="M1 1h10v9H1zm3 3v3h4V4z" fill-rule="evenodd" /></svg></button>
            <button class="close" aria-label="Close"><svg width="12" height="12"><path d="M1 1h3l2 3 2-3h3L8 6l3 5H8L6 8l-2 3H1l3-5z" /></svg></button>
          </div>
        </header>
        <div class="gbody">
          <nav class="gmenu">{#each ghMenu as m}<button>{m}</button>{/each}<span>co2 emissions final*</span></nav>
          <div class="gtabs">{#each ghTabs as t}<button class:on={t === 'Maths'}>{t}</button>{/each}</div>
          <div class="ribbon">
            {#each groups as g}
              <section class="group" style:flex-basis="{g.icons.length === 2 ? 33 : g.icons.length === 8 ? 137 : 71}px">
                <div class="gicons" style:grid-template-columns="repeat({g.icons.length / 2}, 1fr)">
                  {#each g.icons as m, i}<button aria-label="{g.name} {i + 1}">{@render ico(m, 24)}</button>{/each}
                </div>
                <h2>{g.name}{#if g.more}<em>+</em>{/if}</h2>
              </section>
            {/each}
          </div>
          <div class="gtools">
            <button aria-label="Open">{@render ico(ghTools.open, 24)}</button>
            <button aria-label="Save">{@render ico(ghTools.save, 24)}</button>
            <label class="zoom"><select aria-label="Zoom"><option>125%</option></select></label>
            <button class="dd" aria-label="Fit">{@render ico(ghTools.fit, 24)}</button>
            <button class="dd" aria-label="View">{@render ico(ghTools.eye, 24)}</button>
            <button aria-label="Sketch">{@render ico(ghTools.brush, 24)}</button>
            <span class="grow"></span>
            <button aria-label="No preview">{@render ico(ghTools.none, 22)}</button>
            <button aria-label="Wireframe preview">{@render ico(ghTools.wire, 24)}</button>
            <button class="active" aria-label="Shaded preview">{@render ico(ghTools.solid, 24)}</button>
            <span class="sep"></span>
            <button aria-label="Selected only">{@render ico(ghTools.sel, 24)}</button>
            <button aria-label="Document preview">{@render ico(ghTools.half, 24)}</button>
            <span class="sep tight"></span>
            <button class="dd" aria-label="Preview quality">{@render ico(ghTools.ball, 22)}</button>
          </div>
          <div class="canvas">
            <svg class="graph" aria-label="Component graph">
              <defs>
                <linearGradient id="body" x2="0" y2="1"><stop offset="0" stop-color="#e4e7f0" /><stop offset=".25" stop-color="#b6bdd2" /><stop offset=".3" stop-color="#a2adcc" /><stop offset="1" stop-color="#8292b2" /></linearGradient>
                <linearGradient id="ramp"><stop offset="0" stop-color="#d8260f" /><stop offset=".02" stop-color="#e85a1a" /><stop offset=".035" stop-color="#f6f53b" /><stop offset=".07" stop-color="#e8ee44" /><stop offset=".12" stop-color="#3766ee" /></linearGradient>
                <linearGradient id="vign" x2="0" y2="1"><stop offset="0" stop-opacity=".35" /><stop offset=".18" stop-opacity="0" /><stop offset=".8" stop-opacity="0" /><stop offset="1" stop-opacity=".3" /></linearGradient>
                <linearGradient id="gem" x1="1" x2="0" y2="1"><stop offset="0" stop-color="#ffa51f" /><stop offset=".5" stop-color="#ff6b4a" /><stop offset="1" stop-color="#ff1fa0" /></linearGradient>
                <radialGradient id="orb"><stop offset="0" stop-color="#e9eeee" /><stop offset=".7" stop-color="#cdd4d3" /><stop offset="1" stop-color="#fff" /></radialGradient>
              </defs>
              <g transform="translate(-1228 -550)">
                <g class="grid">{#each gridX as x}<path d="M{x} 550v812" />{/each}{#each gridY as y}<path d="M1230 {y}h984" />{/each}</g>
                <g class="wire">{#each solid as d}<path {d} />{/each}</g>
                <g class="cable">{#each dashed as d}<path {d} /><path class="core" {d} />{/each}</g>

                <g class="port">
                  {#each nodes as n}
                    {#each n.in as p}<circle cx={n.x} cy={p[1]} r="5" />{/each}
                    {#each n.out as p}<circle cx={n.x + n.w} cy={p[1]} r="5" />{/each}
                  {/each}
                  {#each [[1302, 877], [1382, 877], [1600, 1054], [1600, 1079], [1600, 1103], [1885, 1079], [2048, 813], [2048, 839], [1946, 1190]] as [x, y]}<circle cx={x} cy={y} r="5" />{/each}
                </g>

                {#each nodes as n}
                  <rect class="node" x={n.x} y={n.y} width={n.w} height={n.h} rx="3" />
                  {#each n.in as p}<text class="pt" x={n.x + (n.w > 90 ? 17 : n.w < 75 ? 9 : 13)} y={p[1] + 5} text-anchor="middle">{p[0]}</text>{/each}
                  {#each n.out as p}<text class="pt" x={n.x + n.w - 18} y={p[1] + 5} text-anchor="middle">{p[0]}</text>{/each}
                  <g transform="translate({n.ix} {n.iy})">{@html n.icon}</g>
                {/each}

                <rect x="1302" y="854" width="80" height="47" rx="3" fill="#f7fb3e" stroke="#6d7d1a" />
                <text class="panel" x="1312" y="881">0 to 1</text>

                <rect class="node" x="1600" y="1038" width="285" height="80" rx="3" />
                <text class="pt" x="1608" y="1059">L0</text><text class="pt" x="1608" y="1084">L1</text><text class="pt" x="1618" y="1108">t</text>
                <rect x="1628" y="1042" width="247" height="73" fill="url(#ramp)" /><rect x="1628" y="1042" width="247" height="73" fill="url(#vign)" stroke="#111" stroke-width="2" />
                <path d="M1628 1042h16q-1 12-16 16z" fill="#5ddc1c" stroke="#111" stroke-width="2" /><path d="M1630 1044h12l-5 8z" fill="#f0651b" />
                <path d="M1628 1078.500h247" stroke="#8da4e8" />
                <g class="grip"><circle cx="1628" cy="1079" r="4" /><circle cx="1636" cy="1079" r="4" /><circle cx="1661" cy="1079" r="4" /></g>

                <path d="M2051 798h59l-4 4 5 5-5 4 5 5-5 4 5 5-5 4 5 5-5 4 5 5-5 4 4 6h-59q-3 0-3-3v-49q0-3 3-3z" fill="#f3f4f2" stroke="#333" />
                <text class="pt" x="2057" y="818">G</text><text class="pt" x="2058" y="844">S</text>
                <path d="M2073 811h29v29h-29z" fill="#cfd6d5" stroke="#111" stroke-width="2" /><path d="M2074 812h12v4h-12z" fill="#2340ee" /><path d="M2082 839q-3-18 12-19 5 0 7 3v16z" fill="#55e01e" stroke="#1d5a10" /><circle cx="2092" cy="828" r="4" fill="#bdf59d" />

                <circle cx="2184" cy="1324" r="20" fill="url(#orb)" stroke="#333" /><circle cx="2184" cy="1324" r="17" fill="none" stroke="#fff" stroke-width="3" stroke-dasharray="18 9" opacity=".7" />
                <path d="M2163 1320q3-18 22-17" fill="none" stroke="#111" stroke-width="4" /><path d="M2154 1314l8-2 4 10-7-2z" fill="#111" />
                <path d="M1229 1333h7v28h-7z" fill="#8b9190" stroke="#111" stroke-width="2" />
              </g>
            </svg>
            <label class="slider"><span>Transparency</span><input type="range" min="0" max="1" step="0.1" value="0" /><output>0.0</output></label>
          </div>
          <footer class="gstatus"><span>..</span><span>0.9.0076</span><i></i></footer>
        </div>
      </article>
    </div>

    <footer class="taskbar">
      <svg class="wall" viewBox="0 0 1920 41" preserveAspectRatio="none" aria-hidden="true">
        <path d="M0 0h1920v41H0z" fill="#0e1012" />
        <path d="M430 0h70l-20 41h-50zM370 41l40-41h18v41z" fill="#4d5658" />
        <path d="M395 0h500l-40 41H380z" fill="#8b9799" opacity=".35" />
        <path d="M440 0h300l30 41H430z" fill="#a9b7bb" />
        <path d="M720 0h45q40 30 50 41h-60z" fill="#c3d9dc" />
        <path d="M790 0h90q30 12 40 20-40-4-80-10z" fill="#96aa5e" />
        <path d="M800 20q50 10 100 21h-80zM930 16l60 25h-90z" fill="#a3b1b6" />
        <path d="M960 0h410l40 41H940z" fill="#a1afb4" />
        <path d="M1340 0h258l-40 41H1400l-60-20z" fill="#a5b6bc" />
        <path d="M1358 0h44q28 22 70 22 34 0 44-22h20q-15 38-75 31l-38-3 2 13h-28q-5-25-39-41z" fill="#0c0e10" />
        <path d="M1402 0h112q-10 22-42 22-42 0-70-22z" fill="#8f84cf" />
        <path d="M1598 0h65v41h-110z" fill="#0c0e10" />
        <path d="M1655 0h130l-10 41h-112z" fill="#86a52f" />
        <path d="M1670 0h60q-4 8-14 6-10 14-14 2-12 10-20 6-6-4-12-14z" fill="#0f130a" />
        <path d="M1740 20q20-10 30 0l4 21h-50z" fill="#a3bb5e" />
        <path d="M1785 0h135v41h-150z" fill="#0f1210" />
        <path d="M1850 41l20-14 20-22 15 0 4 36z" fill="#4c6a2a" />
      </svg>
      <div class="tasks">
        {#each tasks as [n, m, run]}<button aria-label={n} class:run={run >= 1} class:hot={run === 2}>{@render ico(m, 36)}</button>{/each}
      </div>
      <div class="tray">
        <svg class="ico" width="110" height="20" aria-hidden="true"><g fill="#eef1f1"><path d="M3 13h8l-4-5zM26 3v15h2v-5h9V5h-9V3zM50 16v-3h2v3zM53 16v-5h2v5zM56 16V9h2v7zM59 16V6h2v10zM74 5h7v12h-7zM83 3h2v4h3v6h-7V7h2zM96 8h4l5-4v12l-5-4h-4z" /></g><path d="M107 7q2 3 0 6" stroke="#eef1f1" fill="none" /></svg>
        <time>2:23 AM<br />2/4/2015</time>
        <button class="peek" aria-label="Show desktop"></button>
      </div>
    </footer>
  </section>
</main>

<style>
  :global(body) { margin: 0; background: #fff; }
  .page { padding: 137px 303px; box-sizing: border-box; font-family: "Liberation Sans", Arial, sans-serif; font-size: 11px; color: #16262b; }
  h1 { margin: 0 0 136px; font: 400 53px/80px "Liberation Serif", serif; color: #000; }
  button { font: inherit; color: inherit; background: none; border: 0; padding: 0; margin: 0; white-space: nowrap; }
  .ico { display: block; flex: none; overflow: visible; }
  .desktop { display: flex; flex-direction: column; overflow: hidden; background: #20303a; }
  .windows { display: flex; align-items: stretch; }

  /* Rhino */
  .rhino { flex: 917 1 0; min-width: 0; overflow: hidden; display: flex; flex-direction: column; background: #e5edf5; }
  .rtitle { display: flex; align-items: center; gap: 5px; height: 21px; background: linear-gradient(90deg, #8b9aa1 0, #7e8e96 240px, #56666f 290px, #22333f 330px, #22333f); border-bottom: 1px solid #0b1216; font: 12px "Open Sans", "Noto Sans", sans-serif; white-space: nowrap; color: #0b1216; }
  .rmenu { display: flex; gap: 15px; align-items: center; height: 18px; padding: 0 7px; background: linear-gradient(#f6f8fd 40%, #e0e7f6); border-bottom: 1px solid #bcd9e6; font: 11px "Open Sans", "Noto Sans", sans-serif; color: #7d9aa3; }
  .history { margin: 4px 0 0 6px; padding: 0 2px; background: #fff; font-size: 12px; height: 77px; border-left: 1px solid #b9dbe3; }
  .history p { margin: 0; line-height: 15px; color: #1d3035; }
  .prompt { display: flex; align-items: center; margin-left: 6px; height: 19px; padding: 0 2px; background: #fff; border-top: 1px solid #7fb6c2; border-left: 1px solid #b9dbe3; font-size: 12px; }
  .prompt b { font-size: 11px; }
  .prompt input { flex: 1; min-width: 0; height: 14px; padding: 0; border: 0; background: none; outline: 0; }
  .rtabs { display: flex; align-items: flex-end; height: 21px; padding-left: 8px; overflow: hidden; border-bottom: 1px solid #d3e6ee; background: #e3e9f5; }
  .rtabs button { height: 15px; padding: 0 8px; border: 1px solid #bfdbe5; border-width: 1px 1px 0 0; border-radius: 3px 4px 0 0; flex: none; background: #dfe7f8; }
  .rtabs .on { background: #fbfcfc; }
  .rtabs button:last-child { padding-right: 0; }
  .tools { display: flex; align-items: center; padding-left: 7px; }
  .tools button { width: 28px; flex: none; display: grid; place-items: center; }
  .std { height: 32px; background: linear-gradient(#fafbfc, #edf1f7); }
  .plug { height: 40px; border-top: 1px solid #f7f7fa; border-bottom: 1px solid #8fd0dc; background: linear-gradient(#fdfdfe, #e0e9f2); }
  .work { display: flex; }
  .side { flex: none; width: 65px; box-sizing: border-box; padding: 7px 8px 0 0; display: grid; grid-template-columns: 28px 28px; justify-content: center; grid-auto-rows: 28px; align-content: start; }
  .side button { display: grid; place-items: center; }
  .views { flex: 1; min-width: 0; display: grid; grid-template-columns: 767px 1fr; grid-template-rows: 365px 362px; gap: 3px; background: #d9e7ec; }
  .view { position: relative; background: #fff; overflow: hidden; outline: 1px solid #8fd0dc; }
  .scene { display: block; width: 100%; height: 100%; }
  .vlabel { position: absolute; top: 1px; left: 0; display: flex; align-items: center; height: 18px; padding: 0 0 0 8px; gap: 8px; background: #c7dce4; color: #66828a; font: 12px "Open Sans", "Noto Sans", sans-serif; }
  .vlabel i { width: 10px; height: 18px; border-left: 1px solid #223; display: grid; place-items: center; }
  .vlabel i::after { content: ""; border: 4px solid transparent; border-top-color: #223; border-bottom: 0; }
  .vlabel.on { background: #79b0df; color: #15303c; }
  .isle path { fill: none; stroke: #111; stroke-width: 4; stroke-dasharray: 5 3; }
  .axis path { fill: none; stroke: #9ec4c6; }
  .axis text { font: 600 13px "Open Sans", sans-serif; fill: #4d7479; }
  .strip { stroke: #2a52b8; opacity: .6; }
  .vtabs { display: flex; height: 21px; margin-left: 65px; border-top: 1px solid #8fd0dc; font: 11px "Open Sans", "Noto Sans", sans-serif; }
  .vtabs button { padding: 0 9px; border: 1px solid #a9c8d4; border-top: 0; border-left: 0; border-radius: 0 0 4px 6px; background: #dbe4f4; }
  .vtabs .on { background: #fff; }
  .vtabs .plus { color: #6d8a90; }
  .osnap { display: flex; align-items: center; gap: 8px; height: 29px; padding: 4px 11px 0; box-sizing: border-box; white-space: nowrap; }
  .osnap label { display: flex; align-items: center; gap: 4px; }
  .osnap input { appearance: none; margin: 0; width: 13px; height: 13px; background: #fbfdfe; border: 1px solid #a5c4cb; display: grid; place-items: center; }
  .osnap input:checked::after { content: ""; width: 3px; height: 7px; margin-bottom: 2px; border: solid #3a62c8; border-width: 0 2px 2px 0; transform: rotate(40deg); }
  .rstatus { display: flex; height: 19px; border-top: 1px solid #b8dbe3; background: #eaf1f6; overflow: hidden; white-space: nowrap; }
  .rstatus > * { flex: none; box-sizing: border-box; min-width: 46px; padding: 0 7px; display: flex; align-items: center; justify-content: center; border-right: 1px solid #c6d4da; font-size: 11px; }
  .rstatus .c1 { width: 57px; } .rstatus .c2 { width: 88px; } .rstatus .c3 { width: 90px; }
  .rstatus .c4 { width: 84px; } .rstatus .c5 { width: 174px; justify-content: flex-start; padding: 0 4px; gap: 2px; }
  .rstatus .c6 { width: 76px; } .rstatus .c7 { width: 84px; }
  .rstatus .c8 { min-width: 0; padding: 0 4px; }
  .c5 i { width: 14px; height: 14px; background: #000; }

  /* Grasshopper */
  .gh { flex: 989 1 0; min-width: 0; position: relative; margin-top: 1px; padding: 0 6px 5px; border-radius: 7px 7px 6px 6px; border: 1px solid #17323c; box-sizing: border-box; background: linear-gradient(#7d939f 0, #a8cde6 60px, #b7dcef 60%, #a2cbe0); box-shadow: 0 0 8px #0a1c24; display: flex; flex-direction: column; }
  .gtitle { display: flex; justify-content: space-between; height: 28px; margin: 0 -6px; padding: 0 7px 0 5px; border-radius: 6px 6px 0 0; background: linear-gradient(#0000 70%, #a6cce4), linear-gradient(90deg, #93a5ad 0, #8399a3 150px, #1e3852 215px, #1e3852 780px, #6d8494 940px, #8a9da6); font: 12px "Open Sans", "Noto Sans", sans-serif; color: #0b1a20; }
  .gtitle span { padding-top: 4px; }
  .winbtns { display: flex; height: 19px; border: 1px solid #2a363c; border-top: 0; border-radius: 0 0 5px 5px; overflow: hidden; }
  .winbtns button { width: 28px; display: grid; place-items: center; background: linear-gradient(#b8c4c9, #7d9099 50%, #64808c); border-right: 1px solid #35464e; }
  .winbtns svg { fill: #fff; stroke: #445; stroke-width: .5; }
  .winbtns .close { width: 46px; border: 0; background: linear-gradient(#dca094, #c24632 50%, #c03d22); }
  .gbody { flex: 1; display: flex; flex-direction: column; border: 1px solid #3e7784; background: #fff; min-width: 0; }
  .gmenu { display: flex; align-items: center; gap: 18px; height: 23px; padding: 0 10px 0 14px; background: linear-gradient(#f8f9fa, #fff); color: #13252a; }
  .gmenu span { margin-left: auto; }
  .gtabs { display: flex; align-items: flex-end; height: 22px; overflow: hidden; color: #7d989c; border-bottom: 1px solid #b5cdcf; }
  .gtabs button { height: 21px; padding: 0 9px 1px; flex: none; }
  .gtabs .on { color: #13252a; border: 1px solid #a6bdbf; border-bottom: 0; border-radius: 5px 5px 0 0; padding: 0 7px 2px; background: #fdfdfd; }
  .ribbon { display: flex; gap: 3px; height: 87px; box-sizing: border-box; padding: 3px 2px 11px; background: linear-gradient(#dbe1df, #f8f9f9); border-bottom: 1px solid #52757b; }
  .group { flex: 0 0 71px; display: flex; flex-direction: column; border: 1px solid #a5b3b3; border-radius: 4px; box-sizing: border-box; background: linear-gradient(#e0e5e3, #eff2f1); overflow: hidden; }
  .gicons { flex: 1; display: grid; align-items: center; }
  .gicons button { display: grid; place-items: center; }
  h2 { margin: 0; height: 14px; background: #15191a; color: #f3dfe3; font: 11px/13px "Liberation Sans", sans-serif; text-align: center; display: flex; justify-content: center; }
  h2 em { font-style: normal; margin-left: auto; margin-right: 3px; width: 8px; }
  h2:has(em)::before { content: ""; width: 8px; margin-right: auto; }
  .gtools { display: flex; align-items: center; gap: 2px; height: 33px; padding: 0 6px 0 4px; background: linear-gradient(#fff, #f3f5f4); }
  .gtools button { min-width: 27px; height: 28px; display: flex; align-items: center; justify-content: center; gap: 4px; }
  .gtools .dd { padding: 0 3px 0 1px; }
  .gtools .dd::after { content: ""; border: 3px solid transparent; border-top: 4px solid #111; border-bottom: 0; }
  .active { outline: 1px solid #4dc0ea; }
  .sep { width: 1px; height: 20px; margin: 0 5px; background: #d3dada; }
  .sep.tight { margin: 0 2px; }
  .grow { flex: 1; }
  .zoom { position: relative; width: 76px; margin-left: 5px; border-left: 1px solid #cfe0e4; }
  .zoom::after { content: ""; position: absolute; right: 5px; top: 9px; border: 4px solid transparent; border-top: 5px solid #111; border-bottom: 0; }
  .zoom select { appearance: none; width: 100%; height: 24px; padding: 0 7px; border: 0; background: #fff; font: 12px "Open Sans", sans-serif; color: #223338; }
  .canvas { position: relative; height: 811px; background: #d6dccd; box-shadow: inset 0 5px 5px -3px #a8b0a2; overflow: hidden; }
  .graph { display: block; width: 100%; height: 100%; }
  .grid path { stroke: #b9d2c8; }
  .wire path { fill: none; stroke: #4a6158; stroke-width: 3; }
  .cable path { fill: none; stroke: #4a6158; stroke-width: 7; stroke-dasharray: 17 5; }
  .cable .core { stroke: #c6cfc2; stroke-width: 3; stroke-dasharray: 12 10; stroke-dashoffset: -3; }
  .port circle, .grip circle { fill: #fff; stroke: #0c0f0f; stroke-width: 2; }
  .node { fill: url(#body); stroke: #28383f; }
  .pt { font: 13px "Open Sans", "Noto Sans", sans-serif; fill: #16242b; }
  .panel { font: 13px "Liberation Mono", monospace; fill: #3cab2c; white-space: pre; }
  .slider { position: absolute; left: 472px; top: 627px; width: 246px; height: 25px; box-sizing: border-box; display: flex; align-items: stretch; border: 1px solid #28383f; border-radius: 3px; background: linear-gradient(#dfe3e2, #f6f7f6); font: 13px "Open Sans", "Noto Sans", sans-serif; overflow: hidden; }
  .slider span { width: 96px; box-sizing: border-box; text-align: center; line-height: 22px; border-right: 1px solid #28383f; background: linear-gradient(#c9cfdf, #9ba7c6 40%, #8797b8); }
  .slider output { margin-left: 22px; line-height: 22px; }
  .slider input { position: absolute; left: 103px; top: 0; width: 138px; height: 23px; margin: 0; appearance: none; background: none; }
  .slider input::-webkit-slider-thumb { appearance: none; width: 10px; height: 10px; box-sizing: border-box; border: 2px solid #111; border-radius: 50%; background: #fff; }
  .gstatus { display: flex; align-items: center; justify-content: space-between; height: 23px; padding: 2px 3px 0 6px; background: #fff; color: #7aa0a4; }
  .gstatus span:nth-child(2) { margin-left: auto; margin-right: 6px; font-size: 11px; }
  .gstatus i { width: 10px; height: 10px; align-self: flex-end; background: radial-gradient(circle, #8aa 1px, #0000 1px) 0 0/4px 4px; clip-path: polygon(100% 0, 100% 100%, 0 100%); }

  /* Taskbar */
  .taskbar { position: relative; display: flex; justify-content: space-between; height: 40px; border-top: 1px solid #1c2629; box-sizing: border-box; }
  .wall { position: absolute; width: 100%; height: 100%; filter: blur(1px); }
  .tasks, .tray { position: relative; display: flex; align-items: stretch; }
  .tasks button { width: 62px; flex: none; box-sizing: border-box; margin: 0; display: grid; place-items: center; border-radius: 3px; }
  .tasks button:first-child { width: 56px; }
  .tasks .run { border: 1px solid #d5dcdc99; background: linear-gradient(135deg, #ffffff55, #ffffff18); margin: 0 1px; width: 60px; }
  .tasks .hot { background: #f2f5f5cc; }
  .tray { align-items: center; gap: 24px; color: #f3f4f4; }
  time { font: 11px/18px "Open Sans", sans-serif; text-align: center; width: 56px; }
  .peek { width: 14px; height: 40px; margin-left: -10px; border-left: 1px solid #aab58a; background: #c7d7a033; }
</style>
